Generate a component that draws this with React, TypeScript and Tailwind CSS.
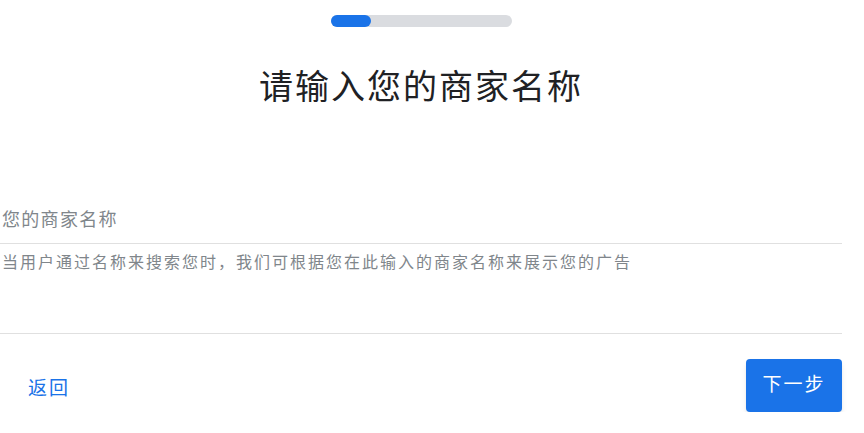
import React from "react";

const font = "font-['Roboto','Noto_Sans_CJK_SC',sans-serif]";

const App: React.FC = () => {
  return (
    <div className={`w-[842px] bg-white ${font}`}>
      <div className="mx-auto mt-[15px] h-3 w-[181px] rounded-full bg-[#dadce0]">
        <div className="h-3 w-[40px] rounded-full bg-[#1a73e8]" />
      </div>

      <h1 className="mt-[40px] text-center text-[34px] leading-[40px] tracking-[2px] font-normal text-[#202124]">
        请输入您的商家名称
      </h1>

      <div className="mt-[101px] border-b border-[#e0e0e0] pb-[11px]">
        <div className="pl-[2px] text-[18px] leading-[24px] tracking-[1.3px] text-[#80868b]">
          您的商家名称
        </div>
      </div>

      <div className="border-b border-[#e0e0e0] pt-[9px] pb-[60px]">
        <p className="pl-[2px] text-[16px] leading-[20px] tracking-[2px] text-[#80868b]">
          当用户通过名称来搜索您时，我们可根据您在此输入的商家名称来展示您的广告
        </p>
      </div>

      <div className="mt-[25px] flex items-center justify-between">
        <button
          type="button"
          className="ml-[28px] mt-[6px] text-[19px] leading-[24px] tracking-[2px] text-[#1a73e8]"
        >
          返回
        </button>
        <button
          type="button"
          className="h-[53px] w-[96px] rounded-[4px] bg-[#1a73e8] text-[19px] tracking-[2px] text-white shadow-md"
        >
          下一步
        </button>
      </div>
    </div>
  );
};

export default App;
